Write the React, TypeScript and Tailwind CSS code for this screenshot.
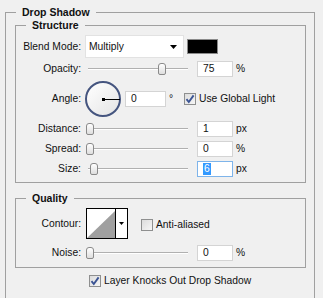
import React from "react";

function Label({ children }: { children: React.ReactNode }) {
  return <div className="w-[65px] shrink-0 text-right">{children}</div>;
}

function Slider({ pos }: { pos: number }) {
  return (
    <div className="relative ml-[5px] h-[16px] w-[102px] shrink-0">
      <div className="absolute left-[2px] right-0 top-[7px] h-[2px] border-t border-[#b0b0b0] bg-white" />
      <div
        className="absolute top-[2px] h-[12px] w-[8px] rounded-t-[3px] rounded-b-[2px] border border-[#8a8a8a] bg-gradient-to-b from-white to-[#dedede]"
        style={{ left: pos }}
      />
    </div>
  );
}

function Field({
  value,
  w = 36,
  focused = false,
  className = "",
}: {
  value: string;
  w?: number;
  focused?: boolean;
  className?: string;
}) {
  return (
    <div
      className={
        "flex h-[16px] shrink-0 items-center border bg-white pl-[5px] " +
        (focused ? "border-[#7eb4ea] " : "border-[#d4d4d4] ") +
        className
      }
      style={{ width: w }}
    >
      {focused ? (
        <span className="bg-[#3399ff] px-[1px] leading-[12px] text-white">{value}</span>
      ) : (
        <span className="leading-[12px]">{value}</span>
      )}
    </div>
  );
}

function CheckBox({ checked, className = "" }: { checked: boolean; className?: string }) {
  return (
    <div
      className={
        "flex h-[12px] w-[12px] shrink-0 items-center justify-center border border-[#8e8f8f] bg-gradient-to-br from-[#dcdcdc] to-[#f6f6f6] " +
        className
      }
    >
      {checked && (
        <svg width="10" height="10" viewBox="0 0 10 10">
          <path d="M1.5 5.2 L3.8 8 L8.6 1.4" fill="none" stroke="#3b5494" strokeWidth="1.9" />
        </svg>
      )}
    </div>
  );
}

function SliderRow({
  label,
  pos,
  value,
  unit,
  focused = false,
  className = "",
}: {
  label: string;
  pos: number;
  value: string;
  unit: string;
  focused?: boolean;
  className?: string;
}) {
  return (
    <div className={"flex h-[16px] items-center " + className}>
      <Label>{label}</Label>
      <Slider pos={pos} />
      <Field value={value} focused={focused} className="ml-[9px]" />
      <span className="ml-[3px]">{unit}</span>
    </div>
  );
}

export default function App() {
  return (
    <div className="h-[298px] w-[323px] overflow-hidden bg-[#f0f0f0] pl-[5px] pt-[6px] font-['Liberation_Sans',Arial,sans-serif] text-[10.3px] text-[#111]">
      <fieldset className="h-[320px] w-[310px] border border-[#a0a0a0] pl-[9px]">
        <legend className="ml-[1px] px-[6px] text-[10.5px] font-bold leading-[13px]">Drop Shadow</legend>

        <fieldset className="w-[291px] border border-[#a0a0a0] pb-[5px] pt-[3px]">
          <legend className="ml-[10px] px-[6px] text-[10.5px] font-bold leading-[13px]">Structure</legend>

          <div className="flex h-[23px] items-center">
            <Label>Blend Mode:</Label>
            <div className="ml-[4px] flex h-[23px] w-[99px] items-center justify-between border border-[#e2e2e2] bg-white pl-[3px] pr-[6px]">
              <span>Multiply</span>
              <svg width="7" height="4" viewBox="0 0 7 4">
                <path d="M0 0 H7 L3.5 4 Z" fill="#000" />
              </svg>
            </div>
            <div className="ml-[3px] h-[15px] w-[31px] border border-[#8a8a8a] bg-black" />
          </div>

          <SliderRow label="Opacity:" pos={72} value="75" unit="%" className="mt-[3px]" />

          <div className="mt-[4px] flex h-[36px] items-center">
            <Label>Angle:</Label>
            <div className="relative ml-[4px] h-[36px] w-[36px] shrink-0 rounded-full border-2 border-[#45557f] bg-gradient-to-br from-white to-[#e4e4e4]">
              <div className="absolute left-[16px] top-[16px] h-[1px] w-[17px] bg-black" />
              <div className="absolute left-[15px] top-[15px] h-[3px] w-[3px] bg-black" />
            </div>
            <Field value="0" w={41} className="ml-[4px]" />
            <span className="ml-[3px] w-[6px]">°</span>
            <CheckBox checked className="ml-[9px]" />
            <span className="ml-[3px]">Use Global Light</span>
          </div>

          <SliderRow label="Distance:" pos={0} value="1" unit="px" className="mt-[4px]" />
          <SliderRow label="Spread:" pos={0} value="0" unit="%" className="mt-[4px]" />
          <SliderRow label="Size:" pos={4} value="6" unit="px" focused className="mt-[4px]" />
        </fieldset>

        <fieldset className="mt-[9px] w-[291px] border border-[#a0a0a0] pb-[6px] pt-[3px]">
          <legend className="ml-[10px] px-[6px] text-[10.5px] font-bold leading-[13px]">Quality</legend>

          <div className="flex h-[31px] items-center">
            <Label>Contour:</Label>
            <div className="ml-[5px] flex h-[31px] w-[42px] shrink-0 border border-black bg-white">
              <svg width="28" height="29" viewBox="0 0 28 29" className="shrink-0">
                <path d="M0 29 L28 2 L28 29 Z" fill="#a0a0a0" />
              </svg>
              <div className="flex flex-1 items-center justify-center border-l border-black">
                <svg width="5" height="3" viewBox="0 0 5 3">
                  <path d="M0 0 H5 L2.5 3 Z" fill="#000" />
                </svg>
              </div>
            </div>
            <CheckBox checked={false} className="ml-[13px] mt-[2px]" />
            <span className="ml-[3px] mt-[2px]">Anti-aliased</span>
          </div>

          <SliderRow label="Noise:" pos={0} value="0" unit="%" className="mt-[6px]" />
        </fieldset>

        <div className="ml-[74px] mt-[7px] flex h-[12px] items-center">
          <CheckBox checked />
          <span className="ml-[3px]">Layer Knocks Out Drop Shadow</span>
        </div>
      </fieldset>
    </div>
  );
}
